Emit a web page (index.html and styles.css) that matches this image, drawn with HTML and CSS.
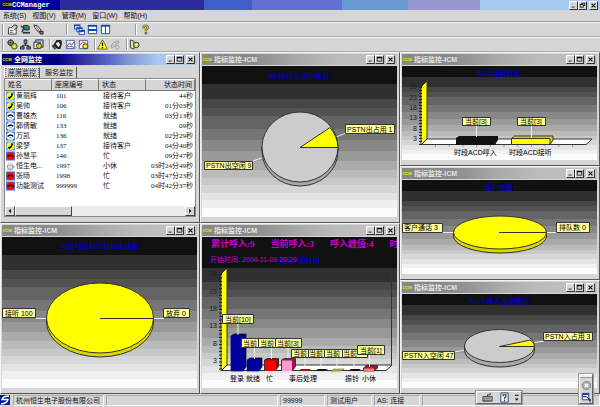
FILE: index.html
```html
<!DOCTYPE html>
<html lang="zh-CN">
<head>
<meta charset="utf-8">
<title>CCManager</title>
<link rel="stylesheet" href="styles.css">
</head>
<body>
<svg class="defs" aria-hidden="true">
  <symbol id="min" viewBox="0 0 9 9"><path d="M2 6h4v1H2z"/></symbol>
  <symbol id="max" viewBox="0 0 9 9"><path d="M1 1h7v6H1zM2 3v3h5V3z" fill-rule="evenodd"/></symbol>
  <symbol id="restore" viewBox="0 0 9 9"><path d="M3 1h5v4H6v2H1V3h2zM4 2v1h2v1h1V2zM2 4v2h3V4z" fill-rule="evenodd"/></symbol>
  <symbol id="close" viewBox="0 0 9 9"><path d="M2 2l5 5M7 2L2 7" stroke="#000" stroke-width="1.4"/></symbol>
  <symbol id="yphone" viewBox="0 0 10 10"><path fill="#5a9be0" d="M0 0h10v10H0z"/><circle cx="5" cy="5" r="4.3" fill="#ff0"/><path d="M3 7.2Q6.6 6.6 6.8 3.2" fill="none" stroke="#000" stroke-width="1.4"/><path d="M2.4 6.2l2 1.8M5.5 2.6l2.4.6" stroke="#000" stroke-width="1.3"/></symbol>
  <symbol id="wphone" viewBox="0 0 10 10"><path fill="#3f78c8" d="M0 0h10v10H0z"/><circle cx="5" cy="5" r="4.3" fill="#fff"/><path d="M1.8 5.6Q5 2.2 8.2 5.6" fill="none" stroke="#000" stroke-width="1.5"/><path d="M3.4 7h3.2" stroke="#888"/></symbol>
  <symbol id="rphone" viewBox="0 0 10 10"><path fill="#3f78c8" d="M0 0h10v10H0z"/><circle cx="5" cy="5" r="4.3" fill="#f00"/><path d="M1.8 5.8Q5 2.4 8.2 5.8" fill="none" stroke="#300" stroke-width="1.5"/></symbol>
  <symbol id="cup" viewBox="0 0 10 10"><path d="M3 3q-1-1 0-2M5 3q-1-1 0-2M7 3q-1-1 0-2" fill="none" stroke="#aaa" stroke-width=".7"/><path d="M1.500 4h6v2.500q-.5 2-2 2h-2q-1.500 0-2-2z" fill="#ddd" stroke="#777" stroke-width=".7"/><path d="M7.500 5h1.500v2H7M1 9.300h7" fill="none" stroke="#777" stroke-width=".7"/></symbol>
</svg>

<div class="app">
  <header class="titlebar">
    <span class="ccm ccm-main">CCM</span><h1>CCManager</h1>
    <span class="winbtns">
      <button aria-label="最小化"><svg><use href="#min"/></svg></button><button aria-label="还原"><svg><use href="#restore"/></svg></button><button class="x" aria-label="关闭"><svg><use href="#close"/></svg></button>
    </span>
  </header>
  <nav class="menu">
    <button>系统(S)</button><button>视图(V)</button><button>管理(M)</button><button>窗口(W)</button><button>帮助(H)</button>
  </nav>
  <div class="toolbar">
    <div class="group g1">
      <button aria-label="属性"><svg viewBox="0 0 12 12"><path d="M2 4h8v7H1.500z" fill="#fff" stroke="#333"/><path d="M3 7h4M3 9h4" stroke="#555"/><path d="M5 4l3-3 3 1v2L8 6" fill="#ccc" stroke="#222"/></svg></button>
      <button aria-label="登录"><svg viewBox="0 0 12 12"><path d="M4 1.500h6v5H4z" fill="#1a8a80" stroke="#222"/><path d="M3 9.500h8" stroke="#333" stroke-width="2"/><path d="M1 2l3 3-2 4" fill="none" stroke="#234" stroke-width="1.500"/><path d="M9 0h2v2H9z" fill="#ee3"/></svg></button>
      <button aria-label="编辑"><svg viewBox="0 0 12 12"><path d="M1 1l4 1 4 5-3 2-4-5z" fill="#fff" stroke="#222"/><path d="M3 2l4 6" stroke="#b33"/><path d="M7 8h4v3H8z" fill="#a66" stroke="#222"/></svg></button>
    </div>
    <div class="group g2">
      <button aria-label="层叠"><svg viewBox="0 0 12 12"><path d="M.5 1.500h6v4h-6zM3 4.500h6v4H3zM5.500 7.500h6v4h-6z" fill="#fff" stroke="#1648b0"/><path d="M0 1.500h7M2.500 4.500H9M5 7.500h7" stroke="#1648b0" stroke-width="2"/></svg></button>
      <button aria-label="横向平铺"><svg viewBox="0 0 12 12"><path d="M1.500 1.500h9v9h-9zM1 6.500h10" fill="#fff" stroke="#1648b0"/><path d="M1 2h10M1 6.500h10" stroke="#1648b0" stroke-width="2"/></svg></button>
      <button aria-label="纵向平铺"><svg viewBox="0 0 12 12"><path d="M1.500 1.500h9v9h-9zM6 1v10" fill="#fff" stroke="#1648b0"/><path d="M1 2h10" stroke="#1648b0" stroke-width="2"/></svg></button>
    </div>
    <div class="group">
      <button aria-label="帮助"><svg viewBox="0 0 12 12"><path d="M4 4.500V3l1-1h2l1 1v2L6.500 6.500V8" fill="none" stroke="#333" stroke-width="2.600"/><path d="M4 4V3l1-1h2l1 1v2L6.500 6.500V7.500" fill="none" stroke="#e0d800" stroke-width="1.300"/><path d="M5.500 9.300h2v1.700h-2z" fill="#dd0" stroke="#333" stroke-width=".7"/></svg></button>
    </div>
  </div>
  <div class="toolbar">
    <div class="group">
      <button aria-label="坐席监控"><svg viewBox="0 0 12 12"><circle cx="4" cy="4" r="3" fill="#998" stroke="#222"/><path d="M4 0v8M0 4h8" stroke="#222" stroke-width=".6"/><circle cx="8" cy="8" r="3" fill="#dd0" stroke="#333"/><circle cx="8" cy="8" r="1" fill="#fff"/></svg></button>
      <button aria-label="组织"><svg viewBox="0 0 12 12"><path d="M6 5v2M2.500 9V7h7v2" fill="none" stroke="#222"/><path d="M4.500 1h3v4h-3z" fill="#4aa" stroke="#222"/><path d="M.5 8.500h4v2.500h-4zM7.500 8.500h4v2.500h-4z" fill="#568ad0" stroke="#222"/></svg></button>
      <button aria-label="指标"><svg viewBox="0 0 12 12"><path d="M3 1h8v8H3z" fill="#bcd" stroke="#224"/><path d="M1 3.500h7v7H1z" fill="#eee" stroke="#224"/><circle cx="6.500" cy="7.500" r="2.800" fill="#dd0" stroke="#333"/><path d="M5 7l3-4" stroke="#25a"/></svg></button>
    </div>
    <div class="group sep">
      <button aria-label="用户"><svg viewBox="0 0 12 12"><path d="M1 7L5 1h5l1 4-2 6H6z" fill="#222"/><path d="M4 5l3-2 2 3-2 3z" fill="#eee"/><path d="M0 7l4 4" stroke="#157" stroke-width="2"/></svg></button>
      <button aria-label="曲线"><svg viewBox="0 0 12 12"><path d="M1.500 1.500h9v9h-9z" fill="#fff" stroke="#3665b0"/><path d="M2 8l3-4 2 3 3-4" fill="none" stroke="#c22"/><path d="M2 9l3-1 5 1" fill="none" stroke="#26b"/></svg></button>
      <button aria-label="报表"><svg viewBox="0 0 12 12"><path d="M1.500 1.500h9v9h-9z" fill="#fff" stroke="#3665b0"/><path d="M2 7l3-4 4 2" fill="none" stroke="#c22"/><circle cx="8" cy="8" r="2.800" fill="#dd0" stroke="#333"/><circle cx="8" cy="8" r="1" fill="#fff"/></svg></button>
    </div>
    <div class="group sep">
      <button aria-label="告警"><svg viewBox="0 0 12 12"><path d="M6 .8L11.500 11H.5z" fill="#ff0" stroke="#663"/><path d="M6 4v3.500M6 8.500V10" stroke="#000" stroke-width="1.300"/></svg></button>
      <button aria-label="电话"><svg viewBox="0 0 12 12"><path d="M1 9Q3 2 9 2l1 2-3 1-3 4-2 1z" fill="#ccc" stroke="#999"/><circle cx="8" cy="9" r="2" fill="none" stroke="#999"/></svg></button>
    </div>
    <div class="group sep">
      <button aria-label="退出"><svg viewBox="0 0 12 12"><path d="M1.500 1l4 1.500V11l-4-1.500z" fill="#ddd" stroke="#333"/><circle cx="8" cy="6.500" r="3" fill="#dd0" stroke="#333"/><circle cx="8" cy="6.500" r="1" fill="#fff"/></svg></button>
    </div>
  </div>

  <main class="desk">
    <div class="col">
      <section class="win active">
        <header><span class="ccm">CCM</span><h2>全网监控</h2><span class="winbtns"><button aria-label="最小化"><svg><use href="#min"/></svg></button><button aria-label="最大化"><svg><use href="#max"/></svg></button><button class="x" aria-label="关闭"><svg><use href="#close"/></svg></button></span></header>
        <div class="tabs"><button class="on">座席监控</button><button>服务监控</button></div>
        <div class="list">
          <table>
            <colgroup><col class="c1"><col class="c1"><col class="c1"><col></colgroup>
            <thead><tr><th>姓名</th><th>座席编号</th><th>状态</th><th>状态时间</th></tr></thead>
            <tbody>
              <tr><td><svg><use href="#yphone"/></svg>黄丽辉</td><td>101</td><td>接待客户</td><td>44秒</td></tr>
              <tr><td><svg><use href="#yphone"/></svg>吴帅</td><td>106</td><td>接待客户</td><td>01分03秒</td></tr>
              <tr><td><svg><use href="#wphone"/></svg>曹雄杰</td><td>116</td><td>就绪</td><td>03分13秒</td></tr>
              <tr><td><svg><use href="#wphone"/></svg>郭倩敏</td><td>133</td><td>就绪</td><td>09秒</td></tr>
              <tr><td><svg><use href="#wphone"/></svg>万凯</td><td>136</td><td>就绪</td><td>02分29秒</td></tr>
              <tr><td><svg><use href="#yphone"/></svg>梁梦</td><td>137</td><td>接待客户</td><td>04分40秒</td></tr>
              <tr><td><svg><use href="#rphone"/></svg>孙慧平</td><td>146</td><td>忙</td><td>09分47秒</td></tr>
              <tr><td><svg><use href="#cup"/></svg>恒生电...</td><td>1997</td><td>小休</td><td>03时24分49秒</td></tr>
              <tr><td><svg><use href="#rphone"/></svg>张旸</td><td>1998</td><td>忙</td><td>03时47分23秒</td></tr>
              <tr><td><svg><use href="#rphone"/></svg>功能测试</td><td>999999</td><td>忙</td><td>04时42分37秒</td></tr>
            </tbody>
          </table>
          <div class="scroll">
            <button aria-label="向左"><svg viewBox="0 0 9 9"><path d="M5.500 2v5L3 4.500z"/></svg></button><span class="thumb"></span><button class="end" aria-label="向右"><svg viewBox="0 0 9 9"><path d="M3.500 2v5L6 4.500z"/></svg></button>
          </div>
        </div>
      </section>

      <section class="win">
        <header><span class="ccm">CCM</span><h2>指标监控-ICM</h2><span class="winbtns"><button aria-label="最小化"><svg><use href="#min"/></svg></button><button aria-label="最大化"><svg><use href="#max"/></svg></button><button class="x" aria-label="关闭"><svg><use href="#close"/></svg></button></span></header>
        <div class="chart">
          <svg viewBox="2 17 195 151">
            <text class="t" x="100" y="29">当前时段ACD接听率饼图</text>
            <path class="ln" d="M36 98.500h12M152 98.500h12"/>
            <path class="edge ydark" d="M46.500 98v4a53.500 35 0 0 0 107 0v-4z"/>
            <ellipse class="edge y" cx="100" cy="98" rx="53.500" ry="35"/>
            <path class="edge" d="M100 98.500h53.500"/>
            <path class="box" d="M2.500 88.500h33v9h-33zM163.500 88.500h26v9h-26z"/>
            <text x="5" y="96">接听 100</text><text x="166" y="96">放弃 0</text>
          </svg>
        </div>
      </section>
    </div>

    <div class="col">
      <section class="win">
        <header><span class="ccm">CCM</span><h2>指标监控-ICM</h2><span class="winbtns"><button aria-label="最小化"><svg><use href="#min"/></svg></button><button aria-label="最大化"><svg><use href="#max"/></svg></button><button class="x" aria-label="关闭"><svg><use href="#close"/></svg></button></span></header>
        <div class="chart">
          <svg viewBox="2 16 195 151">
            <text class="t" x="99" y="29">PSTN呼出占用情况</text>
            <path class="ln" d="M136 87l10-4M64 107l-11 4"/>
            <path class="edge gdark" d="M62 97v4a38 35 0 0 0 76 0v-4z"/>
            <ellipse class="edge g" cx="100" cy="97" rx="38" ry="35"/>
            <path class="edge y" d="M100 97.500h38A38 35 0 0 0 130 77.500z"/>
            <path class="box" d="M145.500 74.500h49v9h-49zM4.500 111.500h48v8h-48z"/>
            <text x="147" y="82">PSTN出占用 1</text><text x="6" y="118">PSTN出空闲 9</text>
          </svg>
        </div>
      </section>

      <section class="win">
        <header><span class="ccm">CCM</span><h2>指标监控-ICM</h2><span class="winbtns"><button aria-label="最小化"><svg><use href="#min"/></svg></button><button aria-label="最大化"><svg><use href="#max"/></svg></button><button class="x" aria-label="关闭"><svg><use href="#close"/></svg></button></span></header>
        <div class="ticker"><span>累计呼入:9</span><span>当前呼入:3</span><span>呼入峰值:4</span><span>时</span></div>
        <div class="chart">
          <svg viewBox="2 32 195 136">
            <text class="t" x="99" y="43">座席状态柱图</text>
            <text class="m" x="10" y="42">开始时间. 2004-11-09 20:29</text>
            <g class="r"><text x="17" y="56">28</text><text x="17" y="74">23</text><text x="17" y="91">18</text><text x="17" y="108">13</text><text x="17" y="126">8</text><text x="17" y="143">3</text></g>
            <path class="edge" d="M191.500 49v96" fill="none"/>
            <path class="edge w" d="M21 150.500l6-5.500h165l-6 5.500z"/>
            <path class="edge y" d="M21 54l6-6v97l-6 6z"/>
            <path d="M20.500 54v97" stroke="#222" stroke-dasharray="1 2.500" stroke-width="3"/>
            <path d="M31 116l3-2h12v33l-3 4H31z" fill="#000078" stroke="#000040" stroke-width=".7"/><path d="M31 116h12v35H31z" fill="#0000a0"/>
            <path d="M47 140l3-2h12v9l-3 4H47z" fill="#000078" stroke="#000040" stroke-width=".7"/><path d="M47 140h12v11H47z" fill="#0000a0"/>
            <path class="edge" d="M64.500 140l3-1.500h11v8l-3 4h-11z" fill="#a00000"/><path d="M65 140.500h11V151H65z" fill="#f00"/>
            <path class="edge" d="M81.500 140l3-1.500h11v8l-3 4h-11z" fill="#a0105a"/><path d="M82 140.500h10V151H82z" fill="#ff9ad0"/>
            <path d="M98 151l3-2h10l-3 2z" fill="#b00018"/><path d="M115 151l3-2h10l-3 2z" fill="#111"/><path d="M131 151l3-2h10l-3 2z" fill="#c8c800" stroke="#444" stroke-width=".5"/><path d="M148 151l3-2h10l-3 2z" fill="#111"/>
            <path d="M163.500 148l3-2.500h11V148l-3 3h-11z" fill="#902030" stroke="#400" stroke-width=".7"/><path d="M164 148.500h10v2.500h-10z" fill="#f08080"/>
            <path class="ln" d="M38 103v12M54.500 127v12M71.500 127v12M88 127v11M105 137v12M121 137v12M137 137v12M154 137v12M169.500 134v13"/>
            <path class="box" d="M22.500 94.500h31v9h-31z"/><text x="25" y="102">当前[10]</text>
            <path class="box" d="M41.500 118.500h17v9h-17z"/><text x="43" y="126">当前</text>
            <path class="box" d="M58.500 118.500h18v9h-18z"/><text x="60" y="126">当前</text>
            <path class="box" d="M75.500 118.500h26v9h-26z"/><text x="77" y="126">当前[3]</text>
            <path class="box" d="M91.500 129.500h17v8h-17z"/><text x="93" y="136">当前</text>
            <path class="box" d="M108.500 129.500h16v8h-16z"/><text x="109" y="136">当前</text>
            <path class="box" d="M124.500 129.500h18v8h-18z"/><text x="126" y="136">当前</text>
            <path class="box" d="M142.500 129.500h25v8h-25z"/><text x="143" y="136">当前</text>
            <path class="box" d="M157.500 125.500h27v9h-27z"/><text x="160" y="133">当前[1]</text>
            <text x="30" y="161">登录</text><text x="46" y="161">就绪</text><text x="66" y="161">忙</text><text x="89" y="161">事后处理</text><text x="145" y="161">振铃</text><text x="162" y="161">小休</text>
          </svg>
        </div>
      </section>
    </div>

    <div class="col">
      <section class="win">
        <header><span class="ccm">CCM</span><h2>指标监控-ICM</h2><span class="winbtns"><button aria-label="最小化"><svg><use href="#min"/></svg></button><button aria-label="最大化"><svg><use href="#max"/></svg></button><button class="x" aria-label="关闭"><svg><use href="#close"/></svg></button></span></header>
        <div class="chart">
          <svg viewBox="2 16 195 94">
            <text class="t" x="99" y="26">ACD接听情况</text>
            <g class="r"><text x="17" y="39">28</text><text x="17" y="50">23</text><text x="17" y="60">18</text><text x="17" y="70">13</text><text x="17" y="81">8</text><text x="17" y="91">3</text></g>
            <path class="edge w" d="M21 94.500l6-5.500h165l-6 5.500z"/>
            <path class="edge y" d="M21 37l6-6v58l-6 6z"/>
            <path d="M20.500 37v58" stroke="#222" stroke-dasharray="1 2" stroke-width="3"/>
            <path d="M35 96h150" stroke="#555" stroke-dasharray="1 12.700"/>
            <path d="M56 88l3-2h39v4l-3 5H56z" fill="#111"/>
            <path class="edge ydark" d="M111.500 88.500l3-2.500H153v4l-3 4.500h-38.500z"/><path class="edge y" d="M111.500 88.500H150v6h-38.500z"/>
            <path class="ln" d="M76.500 75v12M131.500 75v12"/>
            <path class="box" d="M62.500 67.500h28v8h-28zM117.500 67.500h28v8h-28z"/>
            <text x="65" y="74">当前[3]</text><text x="120" y="74">当前[3]</text>
            <text x="54" y="105">时段ACD呼入</text><text x="109" y="105">时段ACD接听</text>
          </svg>
        </div>
      </section>

      <section class="win">
        <header><span class="ccm">CCM</span><h2>指标监控-ICM</h2><span class="winbtns"><button aria-label="最小化"><svg><use href="#min"/></svg></button><button aria-label="最大化"><svg><use href="#max"/></svg></button><button class="x" aria-label="关闭"><svg><use href="#close"/></svg></button></span></header>
        <div class="chart">
          <svg viewBox="2 15 195 94">
            <text class="t" x="99" y="25">客户饼图</text>
            <path class="ln" d="M42 67.500h12M146 67.500h11"/>
            <path class="edge ydark" d="M53.500 67v4a46.500 17 0 0 0 93 0v-4z"/>
            <ellipse class="edge y" cx="100" cy="67.500" rx="46.500" ry="16.500"/>
            <path class="edge" d="M99 67.500h47"/>
            <path class="box" d="M2.500 58.500h40v9h-40zM156.500 57.500h33v10h-33z"/>
            <text x="4" y="65">客户通话 3</text><text x="159" y="65">排队数 0</text>
          </svg>
        </div>
      </section>

      <section class="win">
        <header><span class="ccm">CCM</span><h2>指标监控-ICM</h2><span class="winbtns"><button aria-label="最小化"><svg><use href="#min"/></svg></button><button aria-label="最大化"><svg><use href="#max"/></svg></button><button class="x" aria-label="关闭"><svg><use href="#close"/></svg></button></span></header>
        <div class="chart">
          <svg viewBox="2 19 195 94">
            <text class="t" x="99" y="29">PSTN呼入占用情况</text>
            <path class="ln" d="M133 68l11-2M65 75l-11 2"/>
            <path class="edge gdark" d="M64.500 71v4a35 17 0 0 0 70 0v-4z"/>
            <ellipse class="edge g" cx="99.500" cy="71" rx="35" ry="16.500"/>
            <path class="edge y" d="M99.500 71.500h35q0-3.500-4-6.500z"/>
            <path class="box" d="M143.500 57.500h49v8h-49zM2.500 76.500h52v8h-52z"/>
            <text x="145" y="64">PSTN入占用 3</text><text x="4" y="83">PSTN入空闲 47</text>
          </svg>
        </div>
      </section>
    </div>
  </main>

  <footer class="status">
    <span class="logo"><svg viewBox="0 0 10 10"><path fill="#0a1f9a" d="M0 0h10v10H0z"/><path d="M9 1Q3 1 2 4.500h6Q7 8.500 1 9" fill="none" stroke="#fff" stroke-width="1.300"/></svg></span>
    <span>杭州恒生电子股份有限公司</span><span></span><span>99999</span><span>测试用户</span><span>AS: 连接</span><span></span>
  </footer>

  <div class="ime">
    <button aria-label="键盘"><svg viewBox="0 0 12 12"><path d="M1 5h10v5H1z" fill="#bbb" stroke="#333"/><path d="M2 7h8M2 9h8" stroke="#333" stroke-dasharray="1 1"/><path d="M6 5V3h3V1" fill="none" stroke="#333"/></svg></button>
    <button aria-label="帮助"><svg viewBox="0 0 12 12"><path d="M2 1h8v10H2z" fill="#ffc" stroke="#223a80"/><path d="M4.500 4.500V3h3v2L6 6.500V8M6 8.800V10" fill="none" stroke="#1030b0" stroke-width="1.300"/></svg></button>
    <button class="more" aria-label="选项"><svg viewBox="0 0 6 12"><path d="M1 3h4v1H1zM1 7h4L3 9.500z"/></svg></button>
  </div>
  <div class="dock">
    <button aria-label="关闭浮动栏"><svg viewBox="0 0 12 12"><circle cx="6" cy="6" r="4.500" fill="#aaa" stroke="#888"/><path d="M4 4l4 4M8 4L4 8" stroke="#fff" stroke-width="1.500"/></svg></button>
    <button aria-label="菜单"><svg viewBox="0 0 12 12"><path d="M1.500 1.500h7v7h-7z" fill="#fff" stroke="#223a90"/><path d="M1 2.500h8M2 5h4" stroke="#223a90" stroke-width="1.500"/><path d="M6 5l5 4H9l1 2.500" fill="#235" stroke="#223a90"/></svg></button>
  </div>
</div>
</body>
</html>
```
FILE: styles.css
```css
* { box-sizing: border-box; }

body {
  margin: 0;
  background: #d6d6d6;
  color: #111;
  font: 7px/10px "Liberation Sans", "Noto Sans CJK SC", sans-serif;
}

h1, h2 { margin: 0; font-size: 7px; line-height: 10px; }

button {
  margin: 0;
  padding: 0;
  border: 0;
  background: none;
  color: inherit;
  font: inherit;
}

svg { display: block; }
.defs { display: none; }

.app {
  position: relative;
  display: flex;
  flex-direction: column;
  min-height: 100vh;
}

/* Title bar, menu, toolbars */
.titlebar {
  display: flex;
  align-items: center;
  height: 10px;
  padding-left: 2px;
  color: #fff;
  background: linear-gradient(90deg, #0000a0 0 10%, #2c2c9c 10% 34%, #4060c8 34% 42%, #6470d0 42% 57%, #6898d0 57% 68%, #9898d0 68% 80%, #a6caf0 80%);
}

.titlebar h1 { font-family: "Liberation Mono", monospace; }

.ccm {
  width: 10px;
  color: #f0e800;
  font: bold 4px/6px "Liberation Sans", sans-serif;
  text-align: center;
}

.ccm-main { background: #111; height: 6px; }

.winbtns { display: flex; margin-left: auto; padding-right: 2px; }

.winbtns button {
  width: 9px;
  height: 9px;
  background: #d6d6d6;
  border: 1px solid;
  border-color: #fff #333 #333 #fff;
}

.winbtns .x { margin-left: 2px; }
.winbtns svg { width: 7px; height: 7px; }

.menu {
  display: flex;
  gap: 6px;
  height: 12px;
  padding-left: 3px;
  border-bottom: 1px solid #999;
}

.toolbar {
  display: flex;
  align-items: center;
  height: 15px;
  padding-left: 2px;
  border-top: 1px solid #f4f4f4;
  border-bottom: 1px solid #aaa;
}

.group { display: flex; padding-left: 3px; height: 11px; border-left: 1px solid #999; box-shadow: inset 1px 0 #fff; }
.g1 { width: 64px; }
.g2 { width: 69px; padding-left: 6px; }
.sep { margin-left: 4px; padding-left: 1px; }
.group button { width: 13px; height: 11px; }
.group svg { width: 11px; height: 11px; margin: 0 auto; }

/* Child windows */
.desk {
  flex: 1;
  display: grid;
  grid-template-columns: repeat(3, minmax(0, 1fr));
}

.col { display: flex; flex-direction: column; }

.win {
  flex: 1 1 0;
  display: flex;
  flex-direction: column;
  padding: 1px 2px 5px 1px;
  border: 1px solid #f4f4f4;
  border-right-color: #555;
  border-bottom-color: #555;
}

.win header {
  display: flex;
  align-items: center;
  height: 12px;
  color: #e4e4e4;
  background: linear-gradient(90deg, #888 0 20%, #969696 35%, #aaa 50%, #bcbcbc 70%, #c0c0c0);
  border-bottom: 1px solid #d6d6d6;
}

.win h2 { padding-left: 2px; }

.win.active header {
  color: #fff;
  background: linear-gradient(90deg, #000080 0 28%, #2c2c9c 40%, #5868c8 55%, #8898d4 66%, #a6caf0 80%);
}

.chart {
  flex: 1;
  background: linear-gradient(#111 12%, #303030 12% 22%, #464644 22% 28%, #525252 28% 33%, #646464 33% 42%, #767676 42% 49%, #888 49% 56%, #999 56% 63%, #aaa 63% 69%, #bbb 69% 74%, #c8c8c8 74% 79%, #d6d6d6 79% 84%, #e4e4e4 84% 89%, #f0f0f0 89% 94%, #fcfcfc 94%);
}

.chart svg { width: 100%; }
.t { fill: #0000b8; text-anchor: middle; font-weight: bold; }
.m { fill: #c800c8; }
.r { text-anchor: end; fill: #222; }
.ln { stroke: #eee; fill: none; }
.edge { stroke: #333; }
.box { fill: #ffff99; stroke: #333; }
.y { fill: #ff0; }
.ydark { fill: #d8d800; }
.g { fill: #ccc; }
.gdark { fill: #a8a8a8; }
.w { fill: #fff; }

.ticker {
  display: flex;
  gap: 16px;
  height: 15px;
  padding-left: 9px;
  overflow: hidden;
  color: #c800c8;
  background: #111;
  font: bold 9px/15px "Liberation Serif", "Noto Sans CJK SC", serif;
  white-space: nowrap;
}

.ticker span { flex: none; }

/* Agent list */
.tabs { display: flex; gap: 2px; padding: 1px 0 0 2px; }

.tabs button {
  height: 11px;
  padding: 0 3px;
  border-right: 1px solid #555;
}

.tabs .on { border-left: 1px solid #fff; border-top: 1px solid #fff; outline: 1px dotted #777; outline-offset: -2px; }

.list {
  flex: 1;
  display: flex;
  flex-direction: column;
  margin: 0 1px 0 2px;
  background: #fff;
  border: 1px solid #888;
  font-family: "Liberation Serif", "Noto Sans CJK SC", serif;
}

table { width: 100%; table-layout: fixed; border-collapse: separate; border-spacing: 0; }
.c1 { width: 47px; }

th {
  height: 11px;
  padding: 0 0 0 3px;
  font-weight: normal;
  text-align: left;
  background: #d6d6d6;
  border-right: 1px solid #777;
  border-bottom: 1px solid #777;
  border-top: 1px solid #fff;
}

td { height: 10px; padding: 0 0 0 4px; white-space: nowrap; }
td:first-child { display: flex; gap: 1px; padding-left: 1px; }
td:first-child svg { width: 9px; height: 10px; }
td:last-child, th:last-child { padding: 0 2px 0 0; text-align: right; }

.scroll { display: flex; height: 10px; margin-top: auto; background: #ececec; }

.scroll button, .thumb {
  width: 10px;
  background: #d6d6d6;
  border: 1px solid;
  border-color: #fff #444 #444 #fff;
}

.thumb { width: 30%; }
.scroll .end { margin-left: auto; }

/* Status bar */
.status {
  display: grid;
  grid-template-columns: 11px 91px minmax(0, 1fr) 45px 45px 46px 178px;
  gap: 2px;
  height: 14px;
  padding: 1px 0 2px;
}

.status span { padding-left: 2px; border: 1px solid; border-color: #aaa #f4f4f4 #f4f4f4 #aaa; line-height: 9px; }
.status .logo { padding: 0; border: 0; }
.logo svg { width: 10px; height: 10px; }

/* Floating bars */
.ime, .dock {
  position: absolute;
  bottom: 4px;
  display: flex;
  background: #d6d6d6;
  border: 1px solid;
  border-color: #fff #666 #666 #fff;
  outline: 1px solid #999;
}

.ime { right: 78px; padding-left: 2px; }
.ime button { width: 17px; height: 11px; }
.ime .more { width: 8px; }
.ime svg { height: 11px; margin: 0 auto; }
.dock svg { height: 11px; margin: 0 auto; }
.dock { right: 7px; flex-direction: column; width: 14px; padding-top: 4px; box-shadow: inset 0 2px #eee, inset 0 3px #999; }
.dock button { height: 12px; }
```
